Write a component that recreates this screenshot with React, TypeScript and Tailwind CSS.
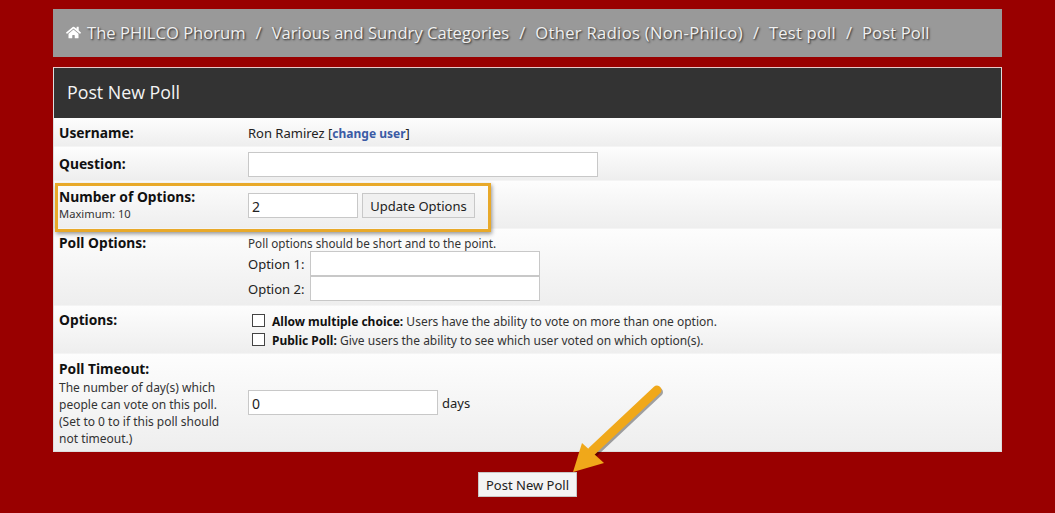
import { FaHome } from 'react-icons/fa'

const crumbs = [
  { name: 'Various and Sundry Categories', cls: '' },
  { name: 'Other Radios (Non-Philco)', cls: 'tracking-[0.32px]' },
  { name: 'Test poll', cls: 'tracking-[0.2px]' },
  { name: 'Post Poll', cls: 'tracking-[0.12px]' },
]

const rowClass = 'flex border-b border-[#f4f4f4] bg-linear-to-b from-[#fdfdfd] to-[#eeeeee]'
const labelClass = 'w-[194px] shrink-0 pl-[5px] text-[13.8px] font-bold text-[#111]'
const inputClass = 'block h-[25px] border border-[#c8c8c8] bg-white px-[3px] pt-[2px] text-[14px] text-[#222]'

function Check({ label, text }: { label: string; text: string }) {
  return (
    <div className="flex h-[19px] items-center pl-[4px]">
      <span className="h-[13px] w-[13px] shrink-0 border border-[#444] bg-white" />
      <span className="ml-[7px] mt-[3px] text-[12px] text-[#333]">
        <b className="text-[#111]">{label}</b> {text}
      </span>
    </div>
  )
}

export default function App() {
  return (
    <div className="relative h-[513px] w-[1055px] overflow-hidden bg-[#990000] pt-[9px] font-['Noto_Sans',sans-serif]">
      {/* Breadcrumb */}
      <div className="mx-[53px] flex h-[48px] items-center gap-[10px] bg-[#999999] pl-[13px] text-[16.6px] text-[#f0f0f0] font-['Open_Sans',sans-serif] [text-shadow:1px_1px_2px_#222]">
        <span className="flex items-center gap-[6px]">
          <FaHome className="text-[15px] text-white" />
          The PHILCO Phorum
        </span>
        {crumbs.map(c => (
          <span key={c.name} className="flex items-center gap-[10px]">
            <span>/</span>
            <span className={c.cls}>{c.name}</span>
          </span>
        ))}
      </div>

      {/* Poll form */}
      <div className="mx-[53px] mt-[10px] border border-[#dddddd] border-t-[#e8c8c8]">
        <div className="flex h-[50px] items-center bg-[#333333] pb-[2px] pl-[13px] text-[17.8px] text-[#f4f4f4] font-['Open_Sans',sans-serif]">
          Post New Poll
        </div>

        <div className={`${rowClass} h-[29px] items-center pt-[2px]`}>
          <div className={labelClass}>Username:</div>
          <div className="pt-[2px] text-[13px] text-[#222]">
            Ron Ramirez [<a className="text-[12px] font-bold text-[#3b5ba5]">change user</a>]
          </div>
        </div>

        <div className={`${rowClass} h-[34px] items-center pt-[2px]`}>
          <div className={labelClass}>Question:</div>
          <input className={`${inputClass} w-[350px]`} />
        </div>

        <div className={`${rowClass} h-[48px] items-center pt-[2px]`}>
          <div className={`${labelClass} leading-[16px]`}>
            Number of Options:
            <div className="mt-[1px] text-[11.2px] font-normal text-[#333]">Maximum: 10</div>
          </div>
          <input className={`${inputClass} w-[110px]`} defaultValue="2" />
          <button className="ml-[4px] h-[25px] w-[113px] border border-[#c8c8c8] bg-[#f0f0f0] pt-[2px] text-[13px] text-[#222]">
            Update Options
          </button>
        </div>

        <div className={`${rowClass} h-[77px]`}>
          <div className={`${labelClass} pt-[4px]`}>Poll Options:</div>
          <div className="pt-[5px] text-[13px] text-[#222]">
            <div className="h-[17px] pt-[1px] text-[11.7px] leading-[16px] text-[#333]">Poll options should be short and to the point.</div>
            <div className="flex h-[25px] items-center">
              <span className="w-[62px] pt-[2px]">Option 1:</span>
              <input className={`${inputClass} w-[230px]`} />
            </div>
            <div className="flex h-[25px] items-center">
              <span className="w-[62px] pt-[2px]">Option 2:</span>
              <input className={`${inputClass} w-[230px]`} />
            </div>
          </div>
        </div>

        <div className={`${rowClass} h-[48px]`}>
          <div className={`${labelClass} pt-[4px]`}>Options:</div>
          <div className="pt-[5px]">
            <Check label="Allow multiple choice:" text="Users have the ability to vote on more than one option." />
            <Check label="Public Poll:" text="Give users the ability to see which user voted on which option(s)." />
          </div>
        </div>

        <div className="flex h-[97px] items-center bg-linear-to-b from-[#fdfdfd] to-[#eeeeee]">
          <div className={`${labelClass} self-start pt-[6px] leading-[18px]`}>
            Poll Timeout:
            <div className="mt-[1px] w-[170px] text-[12px] font-normal leading-[17px] text-[#333]">
              The number of day(s) which people can vote on this poll. (Set to 0 to if this poll should not timeout.)
            </div>
          </div>
          <input className={`${inputClass} w-[190px]`} defaultValue="0" />
          <span className="ml-[4px] pt-[2px] text-[13px] text-[#222]">days</span>
        </div>
      </div>

      {/* Submit */}
      <div className="mt-[20px] flex justify-center">
        <button className="h-[25px] w-[99px] border border-[#c8c8c8] bg-[#f4f4f4] pt-[3px] text-[13px] text-[#222]">
          Post New Poll
        </button>
      </div>

      {/* Annotation: highlight box */}
      <div className="absolute left-[55px] top-[183px] h-[49px] w-[436px] border-[3px] border-[#e8a92a] shadow-[1px_2px_4px_rgba(0,0,0,0.4)]" />

      {/* Annotation: arrow */}
      <svg className="absolute left-[560px] top-[375px]" width="110" height="105" viewBox="560 375 110 105">
        <g opacity="0.35" transform="translate(1.5 2)">
          <path d="M657 390 L592 451" stroke="#000" strokeWidth="9" strokeLinecap="round" fill="none" />
        </g>
        <path d="M657 390 L592 451" stroke="#f0a81a" strokeWidth="9" strokeLinecap="round" fill="none" />
        <path d="M573 472 L582 443 L604 463 Z" fill="#f0a81a" />
      </svg>
    </div>
  )
}
